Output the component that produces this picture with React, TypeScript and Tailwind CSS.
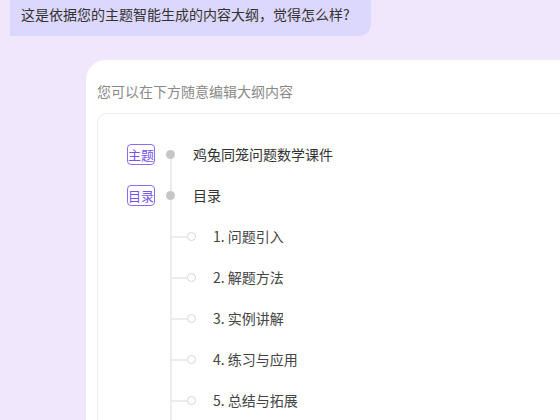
const subItems = ["1. 问题引入", "2. 解题方法", "3. 实例讲解", "4. 练习与应用", "5. 总结与拓展"];

const TopRow = ({ tag, text, first }: { tag: string; text: string; first?: boolean }) => (
    <div className="flex h-[41px] items-stretch">
        <div className="flex w-[28px] items-center">
            <span className="flex h-[21px] w-[29px] items-center justify-center rounded-[4px] border border-[#8d6cf6] text-[13px] leading-none text-[#7754ef]">{tag}</span>
        </div>
        <div className="ml-[11px] flex w-[9px] flex-col items-center">
            <div className={`w-[2px] flex-1 ${first ? "bg-transparent" : "bg-[#ececec]"}`} />
            <div className="h-[9px] w-[9px] rounded-full bg-[#c6c6c6]" />
            <div className="w-[2px] flex-1 bg-[#ececec]" />
        </div>
        <div className="ml-[18px] flex items-center text-[14px] text-[#333]">{text}</div>
    </div>
)

const SubRow = ({ text }: { text: string }) => (
    <div className="flex h-[41px] items-stretch">
        <div className="w-[28px]" />
        <div className="ml-[11px] flex w-[9px] justify-center">
            <div className="w-[2px] bg-[#ececec]" />
        </div>
        <div className="-ml-[4px] flex items-center">
            <div className="h-[2px] w-[16px] bg-[#ececec]" />
            <div className="h-[9px] w-[9px] rounded-full border-[1.5px] border-[#d6d6d6] bg-white" />
        </div>
        <div className="ml-[17px] flex items-center text-[14px] text-[#444]">{text}</div>
    </div>
)

const App = () => {
    return (
        <main className="flex h-[420px] w-[560px] flex-col overflow-hidden bg-[#f0e7fd]" style={{ fontFamily: '"Noto Sans CJK SC", "Noto Sans", sans-serif' }}>
            <div className="ml-[10px] h-[36px] w-[361px] shrink-0 rounded-br-[12px] bg-[#dcd7fc] pl-[11px] pt-[4px] text-[14px] leading-[20px] text-[#333]">
                这是依据您的主题智能生成的内容大纲，觉得怎么样?
            </div>
            <div className="ml-[86px] mt-[24px] w-[560px] shrink-0 rounded-tl-[20px] bg-white pl-[11px] pt-[21px]">
                <p className="text-[14px] leading-[20px] text-[#8a8a8a]">您可以在下方随意编辑大纲内容</p>
                <div className="mt-[12px] h-[400px] rounded-tl-[10px] border border-[#ececec] pl-[29px] pt-[20px]">
                    <TopRow tag="主题" text="鸡兔同笼问题数学课件" first />
                    <TopRow tag="目录" text="目录" />
                    {subItems.map((s) => <SubRow key={s} text={s} />)}
                </div>
            </div>
        </main>
    )
}
export default App
